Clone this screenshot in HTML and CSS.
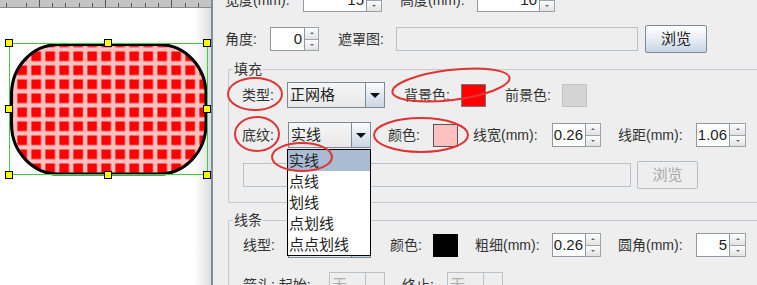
FILE: index.html
```html
<!DOCTYPE html>
<html lang="zh">
<head>
<meta charset="utf-8">
<title>填充属性</title>
<link rel="stylesheet" href="styles.css">
</head>
<body>
<div class="app">
  <div class="canvas">
    <svg width="211" height="285" viewBox="0 0 211 285">
      <defs>
        <pattern id="grid" patternUnits="userSpaceOnUse" x="3.4" y="9.5" width="14" height="14">
          <rect width="14" height="14" fill="#ffc0c0"/>
          <rect width="9.6" height="9.6" fill="#ff0000"/>
        </pattern>
      </defs>
      <rect x="0" y="0" width="211" height="7" fill="#c4c4c4"/>
      <line x1="0" y1="7.5" x2="211" y2="7.5" stroke="#8a8a8a"/>
      <g stroke="#555" stroke-width="1">
        <line x1="6.5" y1="3" x2="6.5" y2="7"/>
        <line x1="26.5" y1="3" x2="26.5" y2="7"/>
        <line x1="39.5" y1="0" x2="39.5" y2="7"/>
        <line x1="52.5" y1="3" x2="52.5" y2="7"/>
        <line x1="65.5" y1="3" x2="65.5" y2="7"/>
        <line x1="79.5" y1="3" x2="79.5" y2="7"/>
        <line x1="92.5" y1="3" x2="92.5" y2="7"/>
        <line x1="105.5" y1="0" x2="105.5" y2="7"/>
        <line x1="118.5" y1="3" x2="118.5" y2="7"/>
        <line x1="131.5" y1="3" x2="131.5" y2="7"/>
        <line x1="145.5" y1="3" x2="145.5" y2="7"/>
        <line x1="158.5" y1="3" x2="158.5" y2="7"/>
        <line x1="171.5" y1="0" x2="171.5" y2="7"/>
        <line x1="185.5" y1="3" x2="185.5" y2="7"/>
        <line x1="198.5" y1="3" x2="198.5" y2="7"/>
      </g>
      <rect x="11.5" y="44.5" width="194.5" height="129.5" rx="47" ry="50" fill="url(#grid)" stroke="#000" stroke-width="3"/>
      <rect x="9.5" y="43.5" width="198" height="131" fill="none" stroke="#3ccc3c"/>
      <g fill="#ffff00" stroke="#000">
        <rect x="5.5" y="39.5" width="7" height="7"/>
        <rect x="104.5" y="39.5" width="7" height="7"/>
        <rect x="203.5" y="39.5" width="7" height="7"/>
        <rect x="5.5" y="105.5" width="7" height="7"/>
        <rect x="203.5" y="105.5" width="7" height="7"/>
        <rect x="5.5" y="171.5" width="7" height="7"/>
        <rect x="104.5" y="171.5" width="7" height="7"/>
        <rect x="203.5" y="171.5" width="7" height="7"/>
      </g>
    </svg>
  </div>
  <div class="divider"></div>
  <div class="panel">
    <div class="row r1">
      <span class="lbl w78">宽度(mm):</span>
      <span class="num w64">15</span>
      <span class="sbtn w15"><i class="up"></i><i class="dn"></i></span>
      <span class="lbl w77 ml18">高度(mm):</span>
      <span class="num w63">10</span>
      <span class="sbtn w15"><i class="up"></i><i class="dn"></i></span>
    </div>
    <div class="row r2">
      <span class="lbl w45">角度:</span>
      <span class="num w35">0</span>
      <span class="sbtn w14"><i class="up"></i><i class="dn"></i></span>
      <span class="lbl w58 ml19">遮罩图:</span>
      <span class="field w242"></span>
      <span class="btn w62 ml7">浏览</span>
    </div>

    <div class="group g1">
      <span class="gtitle">填充</span>
      <div class="row">
        <span class="lbl w45">类型:</span>
        <div class="combo w98"><span class="ctext">正网格</span><span class="carrow"></span></div>
        <span class="lbl w57 ml19">背景色:</span>
        <span class="sw w25 red"></span>
        <span class="lbl w57 ml19">前景色:</span>
        <span class="sw w25 gray"></span>
      </div>
      <div class="row">
        <span class="lbl w46">底纹:</span>
        <div class="combo w83"><span class="ctext">实线</span><span class="carrow"></span></div>
        <span class="lbl w45 ml17">颜色:</span>
        <span class="sw w25 pink"></span>
        <span class="lbl w79 ml15">线宽(mm):</span>
        <span class="num w34">0.26</span>
        <span class="sbtn w15"><i class="up"></i><i class="dn"></i></span>
        <span class="lbl w78 ml17">线距(mm):</span>
        <span class="num w34">1.06</span>
        <span class="sbtn w16"><i class="up"></i><i class="dn"></i></span>
      </div>
      <div class="row">
        <span class="field w388 ml1"></span>
        <span class="btn disabled w61 ml6">浏览</span>
      </div>
    </div>

    <div class="group g2">
      <span class="gtitle">线条</span>
      <div class="row">
        <span class="lbl w45 ml1">线型:</span>
        <div class="combo w83"><span class="ctext"></span><span class="carrow"></span></div>
        <span class="lbl w43 ml19">颜色:</span>
        <span class="sw w25 black"></span>
        <span class="lbl w77 ml17">粗细(mm):</span>
        <span class="num w34">0.26</span>
        <span class="sbtn w15"><i class="up"></i><i class="dn"></i></span>
        <span class="lbl w78 ml17">圆角(mm):</span>
        <span class="num w34">5</span>
        <span class="sbtn w16"><i class="up"></i><i class="dn"></i></span>
      </div>
      <div class="row">
        <span class="lbl w86 ml1">箭头: 起始:</span>
        <div class="combo disabled w56"><span class="ctext">无</span><span class="carrow"></span></div>
        <span class="lbl w45 ml17">终止:</span>
        <div class="combo disabled w56"><span class="ctext">无</span><span class="carrow"></span></div>
      </div>
    </div>
  </div>
</div>

<ul class="popup">
  <li class="sel">实线</li>
  <li>点线</li>
  <li>划线</li>
  <li>点划线</li>
  <li>点点划线</li>
</ul>

<svg class="marks" width="757" height="285" viewBox="0 0 757 285">
  <g fill="none" stroke="#e03434" stroke-width="2">
    <ellipse cx="255" cy="94" rx="27" ry="16"/>
    <ellipse cx="451" cy="85" rx="59" ry="15" transform="rotate(-7 451 85)"/>
    <ellipse cx="257" cy="134" rx="22" ry="17"/>
    <ellipse cx="421" cy="135" rx="47" ry="17"/>
    <ellipse cx="302" cy="157" rx="30" ry="14"/>
  </g>
</svg>
</body>
</html>
```

FILE: styles.css
```css
* { box-sizing: border-box; }
html, body { margin: 0; padding: 0; }
body {
  width: 757px;
  height: 285px;
  overflow: hidden;
  position: relative;
  background: #eeeeee;
  font-family: "Liberation Sans", "Noto Sans CJK SC", sans-serif;
  font-size: 14px;
  color: #333;
}
.app { display: flex; height: 285px; }
.canvas {
  width: 211px;
  flex: none;
  background: linear-gradient(to right, #ffffff 0, #ffffff 194px, #dedede 211px);
}
.canvas svg { display: block; }
.divider { width: 2px; flex: none; background: #7d8aa8; }
.panel { flex: 1; min-width: 0; overflow: hidden; padding-left: 12px; }

.row { display: flex; align-items: center; height: 28px; white-space: nowrap; }
.r1 { margin-top: -14px; }
.r2 { margin-top: 11px; }

.lbl { flex: none; line-height: 16px; color: #333; }

.num {
  flex: none;
  height: 24px;
  border: 1px solid #8e99a4;
  background: #fff;
  text-align: right;
  padding-right: 2px;
  line-height: 22px;
  font-size: 15px;
  color: #222;
}
.sbtn {
  flex: none;
  height: 24px;
  display: flex;
  flex-direction: column;
  border: 1px solid #9aa4ae;
  border-left: none;
}
.sbtn i {
  flex: 1;
  display: flex;
  align-items: center;
  justify-content: center;
  background: linear-gradient(#fdfdfd, #e2e2e2);
}
.sbtn i + i { border-top: 1px solid #9aa4ae; }
.sbtn i::before {
  content: "";
  border-left: 2px solid transparent;
  border-right: 2px solid transparent;
}
.sbtn .up::before { border-bottom: 2px solid #666; }
.sbtn .dn::before { border-top: 2px solid #666; }

.field {
  flex: none;
  height: 24px;
  border: 1px solid #b8c0c8;
  background: #eeeeee;
}
.btn {
  flex: none;
  height: 28px;
  border: 1px solid #7a8a99;
  border-radius: 2px;
  background: linear-gradient(#ffffff, #e4ebf3 55%, #c6d5e5);
  text-align: center;
  line-height: 26px;
  font-size: 15px;
  color: #222;
}
.btn.disabled { border-color: #b5bdc5; background: #eeeeee; color: #a8a8a8; }

.combo {
  flex: none;
  height: 26px;
  display: flex;
  border: 1px solid #7a8a99;
  background: linear-gradient(#f6f6f6, #e8e8e8);
}
.ctext { flex: 1; padding-left: 2px; line-height: 24px; font-size: 15px; color: #222; }
.carrow {
  width: 19px;
  flex: none;
  border-left: 1px solid #7a8a99;
  background: linear-gradient(#fafcfe, #c9d6e4);
  display: flex;
  align-items: center;
  justify-content: center;
}
.carrow::before {
  content: "";
  border-left: 5px solid transparent;
  border-right: 5px solid transparent;
  border-top: 5px solid #111;
}
.combo.disabled { border-color: #b8c0c8; background: #eeeeee; }
.combo.disabled .ctext { color: #b0b0b0; }
.combo.disabled .carrow { border-left-color: #b8c0c8; background: #eeeeee; }
.combo.disabled .carrow::before { border-top-color: transparent; }

.sw { flex: none; height: 23px; border: 1px solid #666; }
.sw.red { background: #ff0000; border-color: #777; }
.sw.gray { background: #d4d4d4; border-color: #c2c2c2; }
.sw.pink { background: #ffc0c0; border-color: #555; }
.sw.black { background: #000; border-color: #000; }

.group {
  position: relative;
  width: 620px;
  margin-left: 3px;
  border: 1px solid #c6cacf;
}
.g1 { margin-top: 16px; padding: 11px 0 13px 13px; height: 134px; }
.g2 { margin-top: 17px; padding: 10px 0 0 13px; height: 120px; }
.group .row + .row { margin-top: 12px; }
.gtitle {
  position: absolute;
  left: 4px;
  top: -9px;
  padding: 0 1px;
  background: #eeeeee;
  line-height: 16px;
  color: #333;
}

.popup {
  position: absolute;
  left: 287px;
  top: 149px;
  width: 84px;
  margin: 0;
  padding: 0;
  list-style: none;
  border: 1px solid #000;
  background: #fff;
}
.popup li {
  height: 21px;
  line-height: 21px;
  padding-left: 1px;
  font-size: 15px;
  color: #222;
}
.popup li.sel { background: #a9bcd3; }

.marks { position: absolute; left: 0; top: 0; pointer-events: none; }

.ml1 { margin-left: 1px; }
.ml6 { margin-left: 6px; }
.ml7 { margin-left: 7px; }
.ml15 { margin-left: 15px; }
.ml17 { margin-left: 17px; }
.ml18 { margin-left: 18px; }
.ml19 { margin-left: 19px; }
.w14 { width: 14px; }
.w15 { width: 15px; }
.w16 { width: 16px; }
.w25 { width: 25px; }
.w34 { width: 34px; }
.w35 { width: 35px; }
.w43 { width: 43px; }
.w45 { width: 45px; }
.w46 { width: 46px; }
.w56 { width: 56px; }
.w57 { width: 57px; }
.w58 { width: 58px; }
.w61 { width: 61px; }
.w62 { width: 62px; }
.w63 { width: 63px; }
.w64 { width: 64px; }
.w77 { width: 77px; }
.w78 { width: 78px; }
.w79 { width: 79px; }
.w83 { width: 83px; }
.w86 { width: 86px; }
.w98 { width: 98px; }
.w242 { width: 242px; }
.w388 { width: 388px; }
```
